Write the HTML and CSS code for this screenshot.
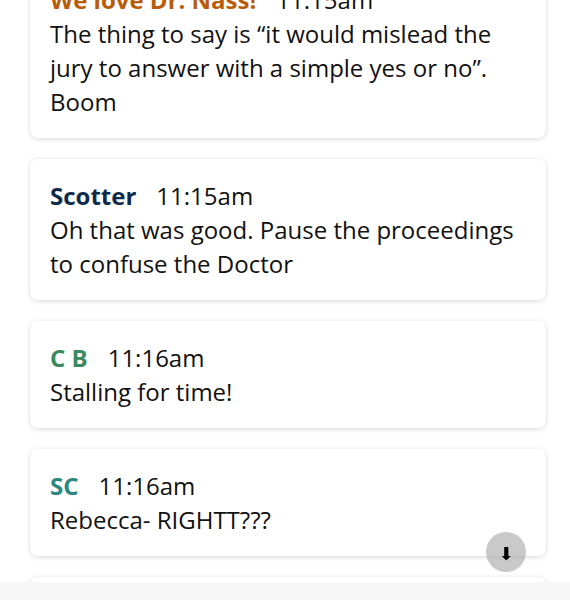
FILE: index.html
```html
<!DOCTYPE html>
<html>
<head>
<meta charset="utf-8">
<link rel="stylesheet" href="styles.css">
</head>
<body>
<div class="feed">
  <div class="card">
    <div class="head"><span class="name orange">We love Dr. Nass!</span><span class="time">11:15am</span></div>
    <div class="text">The thing to say is “it would mislead the jury to answer with a simple yes or no”. Boom</div>
  </div>
  <div class="card">
    <div class="head"><span class="name navy">Scotter</span><span class="time">11:15am</span></div>
    <div class="text">Oh that was good. Pause the proceedings to confuse the Doctor</div>
  </div>
  <div class="card">
    <div class="head"><span class="name green">C B</span><span class="time">11:16am</span></div>
    <div class="text">Stalling for time!</div>
  </div>
  <div class="card">
    <div class="head"><span class="name teal">SC</span><span class="time">11:16am</span></div>
    <div class="text">Rebecca- RIGHTT???</div>
  </div>
  <div class="card">
    <div class="head"><span class="name navy">Scotter</span><span class="time">11:17am</span></div>
    <div class="text">…</div>
  </div>
</div>
<button class="scroll-btn" aria-label="Scroll down">⬇</button>
<div class="bottom-bar"></div>
</body>
</html>
```
FILE: styles.css
```css
html, body {
  margin: 0;
  padding: 0;
  background: #ffffff;
  overflow: hidden;
  height: 600px;
}
body {
  font-family: "Open Sans", "Noto Sans", sans-serif;
  color: #111;
}
.feed {
  margin-top: -37px;
  padding: 0 24px 0 30px;
  display: flex;
  flex-direction: column;
  gap: 21px;
}
.card {
  background: #fff;
  border-radius: 8px;
  box-shadow: 0 1px 5px rgba(0, 0, 0, 0.16);
  padding: 20px 20px 19px 20px;
  font-size: 24px;
  line-height: 34px;
}
.head {
  display: flex;
  align-items: baseline;
}
.name {
  font-weight: 700;
  margin-right: 20px;
}
.orange { color: #b85c0a; }
.navy { color: #0f2b4c; }
.green { color: #3b8a5f; }
.teal { color: #2b8780; }
.time { color: #111; }
.text { color: #111; }
.scroll-btn {
  position: fixed;
  left: 486px;
  top: 532px;
  width: 40px;
  height: 40px;
  border-radius: 50%;
  border: none;
  padding: 4px 0 0 0;
  background: rgba(165, 165, 165, 0.6);
  color: #000;
  font-size: 18px;
  line-height: 36px;
  text-align: center;
  font-family: "DejaVu Sans", sans-serif;
}
.bottom-bar {
  position: fixed;
  left: 0;
  right: 0;
  bottom: 0;
  height: 18px;
  background: #f7f7f7;
}
```
